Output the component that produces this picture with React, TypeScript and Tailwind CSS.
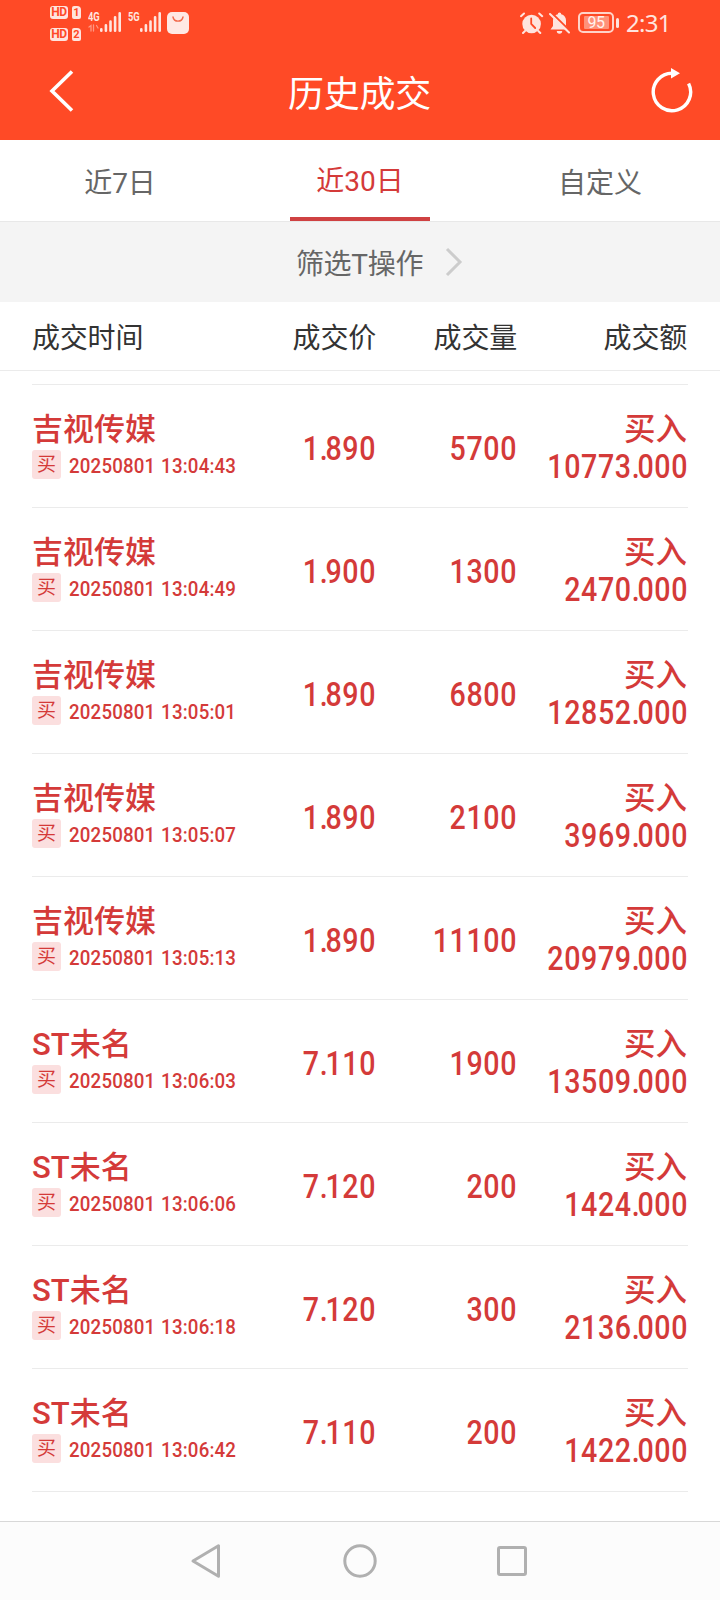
type Trade = { name: string; time: string; price: string; volume: string; amount: string };

const trades: Trade[] = [
  { name: '吉视传媒', time: '20250801 13:04:43', price: '1.890', volume: '5700', amount: '10773.000' },
  { name: '吉视传媒', time: '20250801 13:04:49', price: '1.900', volume: '1300', amount: '2470.000' },
  { name: '吉视传媒', time: '20250801 13:05:01', price: '1.890', volume: '6800', amount: '12852.000' },
  { name: '吉视传媒', time: '20250801 13:05:07', price: '1.890', volume: '2100', amount: '3969.000' },
  { name: '吉视传媒', time: '20250801 13:05:13', price: '1.890', volume: '11100', amount: '20979.000' },
  { name: 'ST未名', time: '20250801 13:06:03', price: '7.110', volume: '1900', amount: '13509.000' },
  { name: 'ST未名', time: '20250801 13:06:06', price: '7.120', volume: '200', amount: '1424.000' },
  { name: 'ST未名', time: '20250801 13:06:18', price: '7.120', volume: '300', amount: '2136.000' },
  { name: 'ST未名', time: '20250801 13:06:42', price: '7.110', volume: '200', amount: '1422.000' },
];

function HdBadge({ n }: { n: string }) {
  return (
    <div className="flex h-[13px] gap-[4px] text-[12px] leading-[13px] font-bold text-[#ff4a26]">
      <span className="w-[18px] rounded-[3px] bg-[#ffe4de] text-center tracking-[-0.5px]">HD</span>
      <span className="w-[9px] rounded-[2px] rounded-tr-[4px] bg-[#ffe4de] text-center text-[11px]">{n}</span>
    </div>
  );
}

function Signal({ label, data }: { label: string; data?: boolean }) {
  return (
    <div className="relative h-[22px] w-[34px]">
      <span className="absolute top-0 left-0 origin-left scale-x-[0.72] text-[13px] leading-[11px] font-bold">{label}</span>
      <svg className="absolute top-0 left-0" width="34" height="22" viewBox="0 0 34 22" stroke="#ffe4de" strokeLinecap="round" fill="none">
        <path strokeWidth="2.6" d="M13.300 19.800v-1.500M17.900 19.800v-5.500M22.500 19.800V10.500M27.100 19.800V6.300M31.700 19.800V2.300" />
        {data && <path strokeWidth="1.3" opacity="0.5" d="M1 16l2-1.5V20M5.5 14v6M8.500 14.500L10 17" />}
      </svg>
    </div>
  );
}

function StatusBar() {
  return (
    <div className="flex h-[50px] items-start pl-[50px] text-[#ffe4de]">
      <div className="flex flex-col gap-[9px] pt-[6px]">
        <HdBadge n="1" />
        <HdBadge n="2" />
      </div>
      <div className="mt-[11px] ml-[7px] flex gap-[6px]">
        <Signal label="4G" data />
        <Signal label="5G" />
      </div>
      <svg className="mt-[12px] ml-[5px]" width="22" height="22" viewBox="0 0 22 22" fill="none">
        <rect width="22" height="22" rx="5" fill="#ffe9e4" />
        <path d="M6 5c1 5.500 9 5.500 10 0" stroke="#f26a4c" strokeWidth="1.400" strokeLinecap="round" />
      </svg>
      <svg className="mt-[12px] ml-[331px]" width="24" height="22" viewBox="0 0 24 22" fill="none" stroke="#ffe4de" strokeWidth="2" strokeLinecap="round">
        <circle cx="11.600" cy="12" r="9.300" fill="#ffe4de" stroke="none" />
        <path d="M1 4.200L4 1.500M22.200 4.200L19.200 1.500M5 19l-2 2M18.300 19l2 2" />
        <path d="M11.200 6.500v5.500l4 4" stroke="#ff4a26" strokeWidth="1.800" />
      </svg>
      <svg className="mt-[12px] ml-[5px]" width="22" height="23" viewBox="0 0 22 23" fill="#ffe4de">
        <path d="M10.500 .5a1.700 1.700 0 0 1 1.700 1.800c3 .7 4.800 3.200 4.800 6V14l2.500 3.500H1.500L4 14V8.300c0-2.800 1.800-5.300 4.800-6A1.700 1.700 0 0 1 10.500.5zM7.800 19h5.400a2.700 2.700 0 0 1-5.400 0z" />
        <path d="M1.700 0L21.700 19.500" stroke="#ff4a26" strokeWidth="2" />
        <path d="M1 2L20 20.500" stroke="#ffe4de" strokeWidth="2" strokeLinecap="round" />
      </svg>
      <div className="mt-[12px] ml-[7px] flex items-center">
        <div className="flex h-[21px] w-[36px] items-center justify-center rounded-[5px] border-2 border-[#ffd3c8]">
          <div className="h-[13px] w-[25px] rounded-[1px] bg-[#ff9179] text-center text-[16px] leading-[14px] tracking-[-0.5px] text-[#fff3f0]">95</div>
        </div>
        <div className="ml-[2px] h-[10px] w-[3px] rounded-full bg-[#ffe4de]" />
      </div>
      <span className="mt-[9px] ml-[7px] font-['Noto_Sans'] text-[24px] leading-[28px] font-normal tracking-[-0.7px]">2:31</span>
    </div>
  );
}

function Num({ value }: { value: string }) {
  const [whole, fraction] = value.split('.');
  return (
    <div className="flex origin-right scale-x-[0.88] justify-end text-[32.500px] leading-[40px] font-medium tracking-[0.700px]">
      <span>
        {whole}
        {fraction && <span className="tracking-[-2.600px]">.</span>}
        {fraction}
      </span>
    </div>
  );
}

function Row({ t }: { t: Trade }) {
  return (
    <div className="grid h-[123px] grid-cols-[218px_126px_141px_171px] border-b border-[#ebebeb] text-[#d43a39]">
      <div className="pt-[25px]">
        <div className="h-[40px] text-[31px] leading-[40px] font-medium whitespace-nowrap">{t.name}</div>
        <div className="flex items-start">
          <span className="h-[29px] w-[29px] shrink-0 rounded-[3px] bg-[#fbdfdf] text-center text-[19px] leading-[30px]">买</span>
          <span className="ml-[8px] origin-left scale-x-[0.89] pt-[2px] text-[21px] leading-[28px] font-medium tracking-[0.200px] [word-spacing:1px] whitespace-nowrap">{t.time}</span>
        </div>
      </div>
      <div className="pt-[44px]">
        <Num value={t.price} />
      </div>
      <div className="pt-[44px]">
        <Num value={t.volume} />
      </div>
      <div className="pt-[25px]">
        <div className="mr-[1px] h-[37px] text-right text-[31.500px] leading-[40px] font-medium">买入</div>
        <Num value={t.amount} />
      </div>
    </div>
  );
}

export default function App() {
  return (
    <div className="flex h-[1600px] w-[720px] flex-col overflow-hidden bg-white font-['Roboto','Noto_Sans_CJK_SC',sans-serif]">
      <header className="h-[140px] bg-[#ff4a26] text-white">
        <StatusBar />
        <div className="grid h-[86px] grid-cols-3 items-center pr-[25px] pl-[24px]">
          <svg className="mb-[5px] ml-[24px]" width="44" height="44" viewBox="0 0 44 44" fill="none" stroke="white" strokeWidth="3.600">
            <path d="M24 2.500L4 22l20 19.500" />
          </svg>
          <h1 className="pt-[4px] text-center text-[36px] leading-[50px] tracking-[-0.2px]">历史成交</h1>
          <svg className="mb-[5px] justify-self-end" width="46" height="46" viewBox="0 0 46 46" fill="none">
            <path d="M39.600 15.500A18.700 18.700 0 1 1 23.500 5.300" stroke="white" strokeWidth="3.400" />
            <path d="M22 0l9 5.300-9 5.300z" fill="white" />
          </svg>
        </div>
      </header>

      <nav className="grid h-[82px] grid-cols-3 border-b border-[#e8e8e8] text-center text-[28px] text-[#666]">
        <span className="pt-[24px] leading-[40px]">近7日</span>
        <span className="mx-[50px] border-b-4 border-[#cf4142] pt-[22px] leading-[40px] text-[#d43a39]">近30日</span>
        <span className="pt-[24px] leading-[40px]">自定义</span>
      </nav>

      <div className="flex h-[80px] items-center justify-center gap-[22px] bg-[#f4f4f4] pl-[39px] text-[28px] leading-[40px] tracking-[-0.3px] text-[#666]">
        <span className="pt-[5px]">筛选T操作</span>
        <svg width="18" height="30" viewBox="0 0 18 30" fill="none" stroke="#ccc" strokeWidth="3">
          <path d="M2 2l13 13L2 28" />
        </svg>
      </div>

      <div className="grid h-[69px] grid-cols-[217px_127px_141px_170px] border-b border-[#ebebeb] px-[32px] pt-[17px] text-right text-[28px] leading-[40px] tracking-[-0.200px] text-[#333]">
        <span className="text-left">成交时间</span>
        <span>成交价</span>
        <span>成交量</span>
        <span>成交额</span>
      </div>

      <main className="mx-[32px] mt-[13px] flex-1 border-t border-[#ebebeb]">
        {trades.map((t) => (
          <Row key={t.time} t={t} />
        ))}
      </main>

      <footer className="flex h-[79px] items-center justify-center gap-[106px] border-t border-[#d8d8d8] bg-[#fcfcfc]">
        <svg width="46" height="40" viewBox="0 0 46 40" fill="none" stroke="#b0b0b0" strokeWidth="3" strokeLinejoin="round">
          <path d="M33.500 4.800v30.400L8 20z" />
        </svg>
        <svg width="46" height="40" viewBox="0 0 46 40" fill="none" stroke="#b0b0b0" strokeWidth="3">
          <circle cx="23" cy="20" r="15.200" />
        </svg>
        <svg width="46" height="40" viewBox="0 0 46 40" fill="none" stroke="#b0b0b0" strokeWidth="3">
          <rect x="9.500" y="6.500" width="27" height="27" rx="1.500" />
        </svg>
      </footer>
    </div>
  );
}
